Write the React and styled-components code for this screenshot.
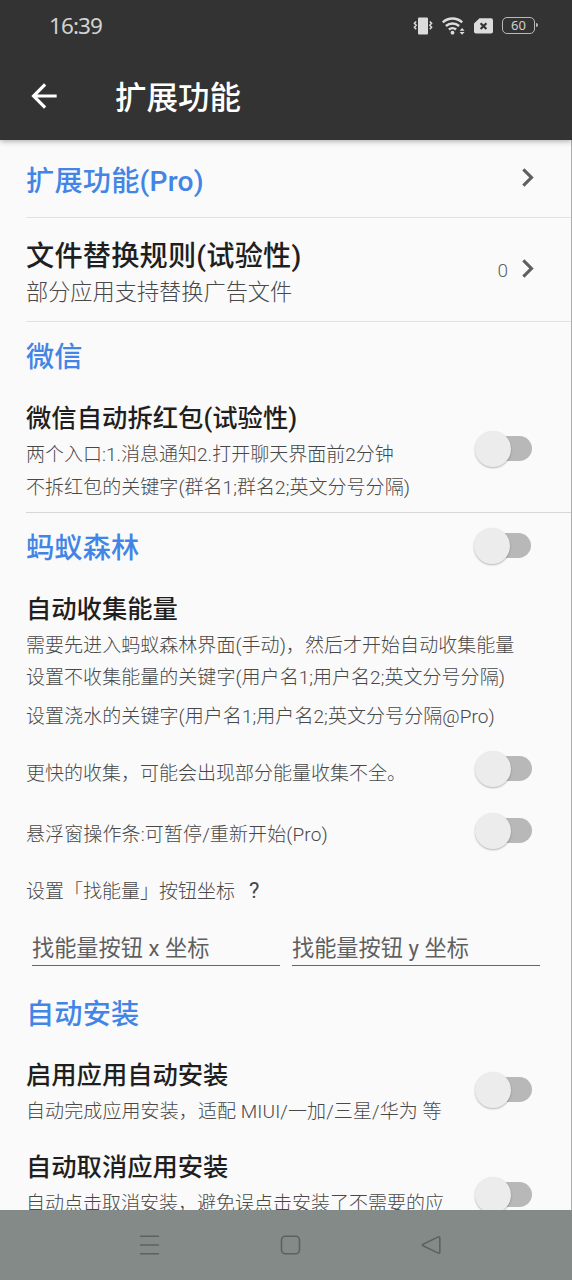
import React, { useState } from "react";
import styled, { createGlobalStyle } from "styled-components";
import { MdArrowBack, MdChevronRight } from "react-icons/md";

const GlobalStyle = createGlobalStyle`
  * {
    box-sizing: border-box;
  }
  body {
    margin: 0;
    background: #fafafa;
    font-family: Roboto, "Noto Sans CJK SC", sans-serif;
  }
`;

const Screen = styled.div`
  width: 572px;
  height: 1280px;
  display: flex;
  flex-direction: column;
  overflow: hidden;
  background: #fafafa;
`;

const Header = styled.header`
  flex: none;
  height: 140px;
  background: #333333;
  box-shadow: 0 1px 6px rgba(0, 0, 0, 0.35);
  z-index: 1;
`;

const StatusBar = styled.div`
  height: 51px;
  padding: 0 35px 0 49px;
  display: flex;
  align-items: center;
  justify-content: space-between;
`;

const Clock = styled.span`
  font-family: "Noto Sans", sans-serif;
  font-size: 22.5px;
  line-height: 51px;
  letter-spacing: -0.9px;
  color: #d2d2d2;
`;

const StatusIcons = styled.div`
  display: flex;
  align-items: center;
  gap: 9px;
  color: #dcdcdc;
  svg {
    display: block;
  }
`;

const Battery = styled.div`
  width: 33px;
  height: 17px;
  margin-right: 2px;
  border: 1.5px solid #b9b9b9;
  border-radius: 5px;
  position: relative;
  font-family: "Noto Sans", sans-serif;
  font-size: 13px;
  line-height: 15px;
  text-align: center;
  color: #d0d0d0;
  &::after {
    content: "";
    position: absolute;
    right: -4px;
    top: 5px;
    width: 2px;
    height: 4px;
    border-radius: 0 2px 2px 0;
    background: #b9b9b9;
  }
`;

const AppBar = styled.div`
  height: 89px;
  padding-left: 25px;
  display: flex;
  align-items: center;
  color: #ffffff;
`;

const PageTitle = styled.h1`
  margin: 6px 0 0 52px;
  font-size: 31.5px;
  font-weight: 500;
  line-height: 40px;
`;

const Content = styled.main`
  flex: 1;
  min-height: 0;
  overflow: hidden;
  padding-left: 26px;
  border-right: 1px solid #adadad;
`;

const Row = styled.section`
  height: ${(props) => props.h}px;
  padding-right: 39px;
  display: flex;
  justify-content: space-between;
  border-bottom: ${(props) => (props.divider ? `1px solid ${props.divider}` : "none")};
`;

const Lines = styled.div`
  padding-top: ${(props) => props.top || 0}px;
  white-space: nowrap;
`;

const Heading = styled.h2`
  margin: 0;
  font-size: 28.2px;
  font-weight: 500;
  line-height: 40px;
  letter-spacing: ${(props) => props.spacing || 0}px;
  color: #4385e6;
`;

const Title = styled.h3`
  margin: 0;
  font-size: ${(props) => (props.large ? 28.2 : 25.3)}px;
  font-weight: 500;
  line-height: 38px;
  letter-spacing: ${(props) => props.spacing || 0}px;
  color: #1f1f1f;
`;

const Note = styled.p`
  margin: ${(props) => props.gap || 0}px 0 0;
  font-size: ${(props) => (props.large ? 22.2 : 19)}px;
  font-weight: 300;
  line-height: 32px;
  letter-spacing: ${(props) => props.spacing || 0}px;
  color: #484848;
`;

const Help = styled.span`
  margin-left: 14px;
  font-size: 22px;
  font-weight: 400;
  line-height: 1;
  color: #484848;
`;

const More = styled.div`
  display: flex;
  align-items: center;
  height: 37px;
  margin: ${(props) => props.top}px -14px 0 0;
  color: #5f5f5f;
  svg {
    display: block;
  }
`;

const Count = styled.span`
  font-size: 19px;
  font-weight: 300;
  margin: 4px 1px 0 0;
`;

const Track = styled.button`
  flex: none;
  width: 56px;
  height: 25px;
  margin: ${(props) => props.top}px ${(props) => props.shift || 0}px 0 0;
  padding: 0;
  border: none;
  border-radius: 13px;
  background: #b8b8b8;
  position: relative;
`;

const Thumb = styled.span`
  position: absolute;
  top: -5.5px;
  left: ${(props) => (props.on ? 22 : -1.5)}px;
  width: 36px;
  height: 36px;
  border-radius: 50%;
  background: #ececec;
  box-shadow: 0 1px 2px rgba(0, 0, 0, 0.28);
`;

const Fields = styled.div`
  height: 56px;
  padding: 14px 31px 0 6px;
  display: flex;
  gap: 12px;
`;

const Field = styled.input`
  flex: 1;
  min-width: 0;
  height: 42px;
  padding: 6px 0 0;
  border: none;
  border-bottom: 1.5px solid #666666;
  border-radius: 0;
  outline: none;
  background: none;
  font-family: inherit;
  font-size: 22.2px;
  &::placeholder {
    color: #5f5f5f;
    opacity: 1;
  }
`;

const NavBar = styled.nav`
  flex: none;
  height: 70px;
  padding: 0 122px 0 130px;
  display: flex;
  align-items: center;
  justify-content: space-between;
  background: #848a88;
  svg {
    display: block;
    fill: none;
    stroke: #5d6261;
    stroke-width: 1.6;
  }
`;

const Switch = ({ top, shift }) => {
  const [on, setOn] = useState(false);
  return (
    <Track top={top} shift={shift} onClick={() => setOn(!on)}>
      <Thumb on={on} />
    </Track>
  );
};

const VibrateIcon = () => (
  <svg width="20" height="18" viewBox="0 0 20 18">
    <rect x="5" y="0.5" width="10" height="17" rx="1" fill="currentColor" />
    <path
      d="M3.2 4.5 1.4 6.3 3.2 8.3 1.4 10.3 3.2 12.3M16.8 4.5 18.6 6.3 16.8 8.3 18.6 10.3 16.8 12.3"
      fill="none"
      stroke="currentColor"
      strokeWidth="1.5"
    />
  </svg>
);

const WifiIcon = () => (
  <svg width="23" height="18" viewBox="0 0 23 18">
    <g fill="none" stroke="currentColor" strokeWidth="2.4">
      <path d="M0.8 5.4A14.2 14.2 0 0 1 20.2 5.4" />
      <path d="M3.9 9A9.8 9.8 0 0 1 17.1 9" />
      <path d="M6.9 12.5A5.4 5.4 0 0 1 14.1 12.5" />
    </g>
    <circle cx="10.5" cy="15.7" r="1.9" fill="currentColor" />
    <path d="M17.6 13.7 20.1 11.1 22.6 13.7zM17.6 15.1 20.1 17.7 22.6 15.1z" fill="currentColor" />
  </svg>
);

const SimIcon = () => (
  <svg width="19" height="16" viewBox="0 0 19 16">
    <path
      d="M5.5 0.3H17A2 2 0 0 1 19 2.3V13.6A2 2 0 0 1 17 15.6H2A2 2 0 0 1 0 13.6V5.6Z"
      fill="currentColor"
    />
    <path d="M6.6 5.2 12.4 11M12.4 5.2 6.6 11" stroke="#333333" strokeWidth="2.2" />
  </svg>
);

const App = () => {
  return (
    <>
      <GlobalStyle />
      <Screen>
        <Header>
          <StatusBar>
            <Clock>16:39</Clock>
            <StatusIcons>
              <VibrateIcon />
              <WifiIcon />
              <SimIcon />
              <Battery>60</Battery>
            </StatusIcons>
          </StatusBar>
          <AppBar>
            <MdArrowBack size={38} />
            <PageTitle>扩展功能</PageTitle>
          </AppBar>
        </Header>

        <Content>
          <Row h={78} divider="#e2e2e2">
            <Lines top={22}>
              <Heading spacing={0.2}>扩展功能(Pro)</Heading>
            </Lines>
            <More top={19}>
              <MdChevronRight size={37} />
            </More>
          </Row>
          <Row h={104} divider="#e2e2e2">
            <Lines top={20}>
              <Title large spacing={0.2}>文件替换规则(试验性)</Title>
              <Note large>部分应用支持替换广告文件</Note>
            </Lines>
            <More top={32}>
              <Count>0</Count>
              <MdChevronRight size={37} />
            </More>
          </Row>

          <Row h={69}>
            <Lines top={16}>
              <Heading>微信</Heading>
            </Lines>
          </Row>
          <Row h={122} divider="#d6d6d6">
            <Lines top={9}>
              <Title spacing={0.05}>微信自动拆红包(试验性)</Title>
              <Note gap={1}>两个入口:1.消息通知2.打开聊天界面前2分钟</Note>
              <Note gap={1} spacing={0.05}>不拆红包的关键字(群名1;群名2;英文分号分隔)</Note>
            </Lines>
            <Switch top={45} />
          </Row>

          <Row h={68}>
            <Lines top={16}>
              <Heading spacing={0.15}>蚂蚁森林</Heading>
            </Lines>
            <Switch top={20} shift={1} />
          </Row>
          <Row h={160}>
            <Lines top={10}>
              <Title>自动收集能量</Title>
              <Note gap={1} spacing={0.04}>需要先进入蚂蚁森林界面(手动)，然后才开始自动收集能量</Note>
              <Note spacing={0.04}>设置不收集能量的关键字(用户名1;用户名2;英文分号分隔)</Note>
              <Note gap={7} spacing={0.07}>设置浇水的关键字(用户名1;用户名2;英文分号分隔@Pro)</Note>
            </Lines>
          </Row>
          <Row h={62}>
            <Lines top={17}>
              <Note>更快的收集，可能会出现部分能量收集不全。</Note>
            </Lines>
            <Switch top={15} />
          </Row>
          <Row h={62}>
            <Lines top={16}>
              <Note spacing={0.12}>悬浮窗操作条:可暂停/重新开始(Pro)</Note>
            </Lines>
            <Switch top={15} />
          </Row>
          <Row h={45}>
            <Lines top={11}>
              <Note>
                设置「找能量」按钮坐标
                <Help>?</Help>
              </Note>
            </Lines>
          </Row>
          <Fields>
            <Field placeholder="找能量按钮 x 坐标" />
            <Field placeholder="找能量按钮 y 坐标" />
          </Fields>

          <Row h={80}>
            <Lines top={29}>
              <Heading spacing={0.15}>自动安装</Heading>
            </Lines>
          </Row>
          <Row h={92}>
            <Lines top={11}>
              <Title>启用应用自动安装</Title>
              <Note gap={1} spacing={0.1}>自动完成应用安装，适配 MIUI/一加/三星/华为 等</Note>
            </Lines>
            <Switch top={31} />
          </Row>
          <Row h={92}>
            <Lines top={11}>
              <Title>自动取消应用安装</Title>
              <Note gap={1}>自动点击取消安装，避免误点击安装了不需要的应</Note>
            </Lines>
            <Switch top={44} />
          </Row>
        </Content>

        <NavBar>
          <svg width="38" height="20" viewBox="0 0 38 20">
            <path d="M10 1.2H29M10 10H29M10 18.8H29" />
          </svg>
          <svg width="38" height="20" viewBox="0 0 38 20">
            <rect x="10.5" y="1.2" width="18" height="17.6" rx="4" />
          </svg>
          <svg width="38" height="20" viewBox="0 0 38 20">
            <path
              d="M26.3 1.9 11 9.2Q9.4 10 11 10.8L26.3 18.1Q27.8 18.6 27.8 17.2V2.8Q27.8 1.4 26.3 1.9Z"
              strokeLinejoin="round"
            />
          </svg>
        </NavBar>
      </Screen>
    </>
  );
};

export default App;
